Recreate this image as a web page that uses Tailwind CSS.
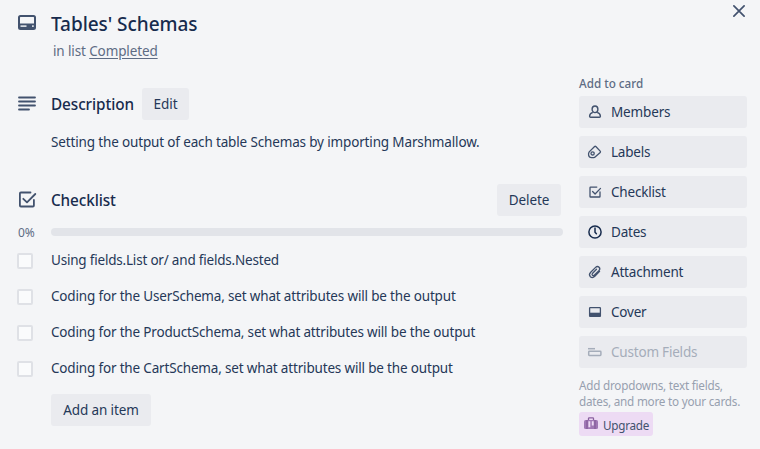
<!DOCTYPE html>
<html lang="en">
<head>
<meta charset="utf-8">
<title>Tables' Schemas</title>
<script src="https://cdn.jsdelivr.net/npm/@tailwindcss/browser@4"></script>
</head>
<body class="w-[760px] h-[449px] overflow-hidden bg-[#f4f5f7] text-[#253858] font-['Segoe_UI','Noto_Sans',sans-serif] text-[13.5px] leading-5 flex">
<main class="w-[563px] shrink-0">
  <header class="flex pt-2">
    <div class="w-[51px] shrink-0 pl-[18px] pt-[7px]">
      <svg class="block" width="18" height="15" viewBox="0 0 18 15"><rect x="1" y="1" width="16" height="13" rx="1.5" fill="none" stroke="#42526e" stroke-width="2"/><path d="M1 8.5h16v5H1z" fill="#42526e"/><path d="M2.5 10.3h6v1.7h-6zM14 10.3h1.8v1.7H14z" fill="#d5d9e0"/></svg>
    </div>
    <div>
      <h1 class="h-8 leading-8 text-[19px] font-medium whitespace-nowrap tracking-[-0.05px] text-[#172b4d]">Tables' Schemas</h1>
      <p class="pl-[2px] pt-[0.5px] h-5 text-[#5e6c84] whitespace-nowrap tracking-[-0.12px]">in list <a class="underline underline-offset-2">Completed</a></p>
    </div>
  </header>

  <section class="mt-7">
    <div class="flex items-center h-8">
      <div class="w-[51px] pl-[18px]">
        <svg class="block mb-[2px]" width="18" height="15" viewBox="0 0 18 15" fill="none" stroke="#42526e" stroke-width="1.8" stroke-linecap="round"><path d="M1 1.5h16M1 5.5h16M1 9.5h16M1 13.5h10"/></svg>
      </div>
      <h2 class="w-[91px] text-[15.3px] font-medium whitespace-nowrap tracking-[-0.08px] text-[#172b4d]">Description</h2>
      <button class="w-[47px] h-8 rounded-[3px] bg-[#eaebef]">Edit</button>
    </div>
    <p class="pl-[51px] mt-3 whitespace-nowrap tracking-[-0.15px]">Setting the output of each table Schemas by importing Marshmallow.</p>
  </section>

  <section class="mt-8">
    <div class="flex items-center h-8">
      <div class="w-[51px] pl-[18px]">
        <svg class="block mb-[1px]" width="19" height="17" viewBox="0 0 19 17" fill="none" stroke="#42526e" stroke-width="1.8" stroke-linecap="round" stroke-linejoin="round"><path d="M12.5 1.5H2.9q-1 0-1 1v12q0 1 1 1h12q1 0 1-1V9M5.3 7.8l3.7 3.6L17.3 3"/></svg>
      </div>
      <h2 class="flex-1 text-[15.3px] font-medium tracking-[-0.1px] text-[#172b4d]">Checklist</h2>
      <button class="w-16 h-8 mr-[2px] rounded-[3px] bg-[#eaebef] tracking-[-0.1px]">Delete</button>
    </div>
    <div class="flex items-center h-8">
      <span class="w-[51px] pl-[18px] pt-px text-[12px] tracking-[-0.2px] text-[#5e6c84]">0%</span>
      <div class="flex-1 h-2 rounded bg-[#e2e4e9]"></div>
    </div>
    <ul class="mt-[-6px] tracking-[-0.17px]">
      <li class="flex items-center h-9"><span class="ml-[17px] mr-[18px] mt-[2px] w-4 h-4 rounded-[2px] border-2 border-[#dfe1e6] bg-[#fafbfc]"></span><span class="whitespace-nowrap tracking-[-0.2px]">Using fields.List or/ and fields.Nested</span></li>
      <li class="flex items-center h-9"><span class="ml-[17px] mr-[18px] mt-[2px] w-4 h-4 rounded-[2px] border-2 border-[#dfe1e6] bg-[#fafbfc]"></span><span class="whitespace-nowrap">Coding for the UserSchema, set what attributes will be the output</span></li>
      <li class="flex items-center h-9"><span class="ml-[17px] mr-[18px] mt-[2px] w-4 h-4 rounded-[2px] border-2 border-[#dfe1e6] bg-[#fafbfc]"></span><span class="whitespace-nowrap">Coding for the ProductSchema, set what attributes will be the output</span></li>
      <li class="flex items-center h-9"><span class="ml-[17px] mr-[18px] mt-[2px] w-4 h-4 rounded-[2px] border-2 border-[#dfe1e6] bg-[#fafbfc]"></span><span class="whitespace-nowrap">Coding for the CartSchema, set what attributes will be the output</span></li>
    </ul>
    <button class="ml-[51px] mt-2 w-[100px] h-8 rounded-[3px] bg-[#eaebef] whitespace-nowrap tracking-[-0.1px]">Add an item</button>
  </section>
</main>

<aside class="w-[168px] ml-4 shrink-0">
  <div class="flex justify-end pt-[5px] h-[75px]">
    <svg class="block mr-[2px]" width="12" height="12" viewBox="0 0 12 12" stroke="#42526e" stroke-width="1.7" stroke-linecap="round"><path d="M.9.9l10.2 10.2M11.1.9L.9 11.1"/></svg>
  </div>
  <h3 class="h-4 leading-4 text-[11.7px] font-medium text-[#5e6c84]">Add to card</h3>
  <div class="flex flex-col gap-2 mt-[5px] tracking-[-0.2px]">
    <button class="flex items-center h-8 pl-2 rounded-[3px] bg-[#eaebef]"><svg class="mr-2" width="16" height="16" viewBox="0 0 16 16" fill="none" stroke="#42526e" stroke-width="1.4"><ellipse cx="8" cy="5.3" rx="2.9" ry="3.3"/><path d="M5.8 8.3C3.5 9.2 2.6 10.6 2.6 12.2q0 1.1 1 1.1h8.8q1 0 1-1.1c0-1.6-.9-3-3.2-3.9" stroke-linejoin="round"/></svg><span class="tracking-[-0.15px]">Members</span></button>
    <button class="flex items-center h-8 pl-2 rounded-[3px] bg-[#eaebef]"><svg class="mr-2" width="16" height="16" viewBox="0 0 16 16" fill="none" stroke="#42526e" stroke-width="1.3" stroke-linejoin="round"><path d="M2.2 7.9L7.6 2.5q.6-.6 1.2 0l4.4 4.6q.6.7 0 1.4l-4.8 4.3q-.8.8-1.6.8H4.5q-2.5 0-2.9-2.4-.3-1.9.6-3.3z"/><circle cx="5.6" cy="9.4" r="1.6"/></svg>Labels</button>
    <button class="flex items-center h-8 pl-2 rounded-[3px] bg-[#eaebef]"><svg class="mr-2" width="16" height="16" viewBox="0 0 16 16" fill="none" stroke="#42526e" stroke-width="1.3" stroke-linejoin="round" stroke-linecap="round"><path d="M9.8 3.1H3.6q-.6 0-.6.6v8.7q0 .6.6.6h8.8q.6 0 .6-.6V8M5.6 7.5l2.5 2.5 5.4-5.6"/></svg>Checklist</button>
    <button class="flex items-center h-8 pl-2 rounded-[3px] bg-[#eaebef]"><svg class="mr-2" width="16" height="16" viewBox="0 0 16 16" fill="none" stroke="#172b4d" stroke-width="1.5" stroke-linecap="round"><circle cx="8" cy="8" r="6.1"/><path d="M8 4v4.2l1.4 1.5"/></svg>Dates</button>
    <button class="flex items-center h-8 pl-2 rounded-[3px] bg-[#eaebef]"><svg class="mr-2" width="16" height="16" viewBox="0 0 16 16" fill="none" stroke="#42526e" stroke-width="1.3" stroke-linecap="round"><path d="M12.6 7.4l-4.8 4.9c-1.3 1.3-3.2 1.5-4.4.4-1.2-1.2-1-3.1.3-4.4l4.9-4.9c1-1 2.5-1.1 3.5-.2.9 1 .8 2.4-.2 3.4L7.5 11c-.7.7-1.5.7-2.1.2-.5-.6-.4-1.4.2-2l3.9-4"/></svg>Attachment</button>
    <button class="flex items-center h-8 pl-2 rounded-[3px] bg-[#eaebef]"><svg class="mr-2" width="16" height="16" viewBox="0 0 16 16"><rect x="2.6" y="3.6" width="10.8" height="8.8" rx=".6" fill="none" stroke="#42526e" stroke-width="1.3"/><path d="M2.5 8.7h11v3.8h-11z" fill="#42526e"/></svg>Cover</button>
    <button class="flex items-center h-8 pl-2 rounded-[3px] bg-[#eaebef] text-[#a5adba]"><svg class="mr-2" width="16" height="16" viewBox="0 0 16 16" fill="none" stroke="#a5adba" stroke-width="1.5"><path d="M1 4.7h7"/><rect x="1.7" y="7.3" width="12.2" height="4.2" rx=".7"/></svg>Custom Fields</button>
  </div>
  <p class="mt-[9px] leading-4 text-[11.7px] tracking-[-0.22px] text-[#97a0af] whitespace-nowrap">Add dropdowns, text fields,<br>dates, and more to your cards.</p>
  <button class="flex items-center mt-[3px] w-[74px] h-6 pl-[5px] rounded-[3px] bg-[#eddbf4] text-[11.7px] tracking-[-0.25px] text-[#42526e]"><svg class="mr-[5px] shrink-0" width="14" height="14" viewBox="0 0 14 14"><rect x="0" y="3" width="14" height="9" rx="1.5" fill="#a078b5"/><path d="M4.5 3V1.5q0-.7.7-.7h3.6q.7 0 .7.7V3" fill="none" stroke="#89609e" stroke-width="1.3"/><path d="M3 3v9M11 3v9" stroke="#89609e" stroke-width="1.5"/><path d="M4.4 4.2h1.9v6H4.4zM7.8 4.2h1.9v4.3H7.8z" fill="#eddbf4"/></svg><span class="pt-px">Upgrade</span></button>
</aside>
</body>
</html>
